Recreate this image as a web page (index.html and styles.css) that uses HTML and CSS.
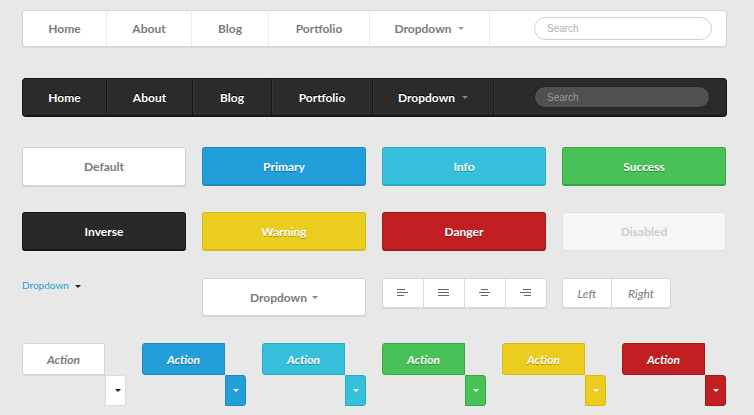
FILE: index.html
```html
<!DOCTYPE html>
<html>
<head>
<meta charset="utf-8">
<link rel="stylesheet" href="styles.css">
</head>
<body>
<div class="page">
  <div class="navbar navbar-light">
    <div class="nav-item nav-home">Home</div>
    <div class="nav-item nav-about">About</div>
    <div class="nav-item nav-blog">Blog</div>
    <div class="nav-item nav-portfolio">Portfolio</div>
    <div class="nav-item nav-dropdown">Dropdown <span class="caret caret-nav"></span></div>
    <div class="search">Search</div>
  </div>

  <div class="navbar navbar-dark">
    <div class="nav-item nav-home">Home</div>
    <div class="nav-item nav-about">About</div>
    <div class="nav-item nav-blog">Blog</div>
    <div class="nav-item nav-portfolio">Portfolio</div>
    <div class="nav-item nav-dropdown">Dropdown <span class="caret caret-nav"></span></div>
    <div class="search">Search</div>
  </div>

  <div class="btn-grid">
    <div class="btn btn-default">Default</div>
    <div class="btn btn-primary">Primary</div>
    <div class="btn btn-info">Info</div>
    <div class="btn btn-success">Success</div>
    <div class="btn btn-inverse">Inverse</div>
    <div class="btn btn-warning">Warning</div>
    <div class="btn btn-danger">Danger</div>
    <div class="btn btn-disabled">Disabled</div>
  </div>

  <div class="misc-row">
    <div class="dd-link">Dropdown <span class="caret caret-dark"></span></div>
    <div class="btn btn-default btn-dd">Dropdown <span class="caret caret-gray"></span></div>
    <div class="btn-group">
      <div class="gbtn gbtn-icon">
        <svg width="12" height="8" viewBox="0 0 12 8"><path d="M0 0.5H8M0 3.5H11M0 6.5H7" stroke="#666" stroke-width="1.2"/></svg>
      </div>
      <div class="gbtn gbtn-icon">
        <svg width="12" height="8" viewBox="0 0 12 8"><path d="M0 0.5H11M0 3.5H11M0 6.5H11" stroke="#666" stroke-width="1.2"/></svg>
      </div>
      <div class="gbtn gbtn-icon">
        <svg width="12" height="8" viewBox="0 0 12 8"><path d="M2 0.5H9M0 3.5H11M2 6.5H9" stroke="#666" stroke-width="1.2"/></svg>
      </div>
      <div class="gbtn gbtn-icon">
        <svg width="12" height="8" viewBox="0 0 12 8"><path d="M3 0.5H11M0 3.5H11M4 6.5H11" stroke="#666" stroke-width="1.2"/></svg>
      </div>
    </div>
    <div class="btn-group btn-group-lr">
      <div class="gbtn gbtn-left">Left</div>
      <div class="gbtn gbtn-right">Right</div>
    </div>
  </div>

  <div class="split-row">
    <div class="split split-default">
      <div class="split-main">Action</div>
      <div class="split-caret"><span class="caret caret-dark"></span></div>
    </div>
    <div class="split split-primary">
      <div class="split-main">Action</div>
      <div class="split-caret"><span class="caret caret-white"></span></div>
    </div>
    <div class="split split-info">
      <div class="split-main">Action</div>
      <div class="split-caret"><span class="caret caret-white"></span></div>
    </div>
    <div class="split split-success">
      <div class="split-main">Action</div>
      <div class="split-caret"><span class="caret caret-white"></span></div>
    </div>
    <div class="split split-warning">
      <div class="split-main">Action</div>
      <div class="split-caret"><span class="caret caret-white"></span></div>
    </div>
    <div class="split split-danger">
      <div class="split-main">Action</div>
      <div class="split-caret"><span class="caret caret-white"></span></div>
    </div>
  </div>
</div>
</body>
</html>
```

FILE: styles.css
```css
* { box-sizing: border-box; }
body {
  margin: 0;
  background: #e8e8e8;
  font-family: Lato, "Open Sans", sans-serif;
}
.page {
  width: 727px;
  padding: 10px 0 0 22px;
}

/* navbars */
.navbar {
  display: flex;
  align-items: stretch;
  width: 705px;
  border-radius: 4px;
}
.navbar-light {
  height: 37px;
  background: #fff;
  border: 1px solid #d4d4d4;
  box-shadow: 0 1px 1px rgba(0,0,0,0.07);
}
.navbar-dark {
  height: 39px;
  margin-top: 31px;
  background: #2b2b2b;
  border: 1px solid #171717;
  border-bottom-width: 2px;
}
.nav-item {
  display: flex;
  align-items: center;
  justify-content: center;
  flex: none;
  font-size: 12px;
  font-weight: 700;
  white-space: pre;
}
.navbar-light .nav-home { width: 84px; }
.navbar-light .nav-about { width: 85px; }
.navbar-light .nav-blog { width: 77px; }
.navbar-light .nav-portfolio { width: 101px; }
.navbar-light .nav-dropdown { width: 120px; }
.navbar-dark .nav-home { width: 84px; }
.navbar-dark .nav-about { width: 86px; }
.navbar-dark .nav-blog { width: 79px; }
.navbar-dark .nav-portfolio { width: 101px; }
.navbar-dark .nav-dropdown { width: 121px; }
.navbar-light .nav-item {
  color: #7a7a7a;
  border-right: 1px solid #ececec;
}
.navbar-dark .nav-item {
  color: #fff;
  border-right: 1px solid #151515;
  box-shadow: 1px 0 0 #363636;
  text-shadow: 0 -1px 0 #000;
}
.search {
  align-self: center;
  margin-left: auto;
  display: flex;
  align-items: center;
  font-family: "Liberation Sans", Arial, sans-serif;
  font-size: 10px;
  padding-left: 12px;
}
.navbar-light .search {
  width: 178px;
  height: 23px;
  margin-right: 14px;
  border: 1px solid #cfcfcf;
  border-radius: 12px;
  color: #b0b0b0;
}
.navbar-dark .search {
  width: 176px;
  height: 22px;
  margin-right: 16px;
  background: #505050;
  border: 1px solid #242424;
  border-radius: 11px;
  color: #9a9a9a;
}

/* carets */
.caret {
  display: inline-block;
  width: 0;
  height: 0;
  border-left: 3px solid transparent;
  border-right: 3px solid transparent;
  border-top: 3px solid #999;
  vertical-align: middle;
  margin-left: 4px;
}
.navbar-dark .caret-nav { border-top-color: #888; }
.caret-dark { border-top-color: #222; }
.caret-gray { border-top-color: #888; }
.caret-white { border-top-color: #fff; margin-left: 0; }

/* buttons */
.btn-grid {
  display: grid;
  grid-template-columns: repeat(4, 164px);
  column-gap: 16px;
  row-gap: 26px;
  margin-top: 30px;
}
.btn {
  height: 39px;
  display: flex;
  align-items: center;
  justify-content: center;
  border-radius: 3px;
  font-size: 12px;
  font-weight: 700;
  color: #fff;
  border: 1px solid transparent;
  border-bottom-width: 2px;
  text-shadow: 0 1px 0 rgba(0,0,0,0.35);
}
.btn-default {
  background: #fff;
  color: #7a7a7a;
  border: 1px solid #d3d3d3;
  box-shadow: 0 1px 1px rgba(0,0,0,0.08);
  text-shadow: none;
}
.btn-primary { background: #229eda; border-color: #1e8ac0; }
.btn-info { background: #36c0db; border-color: #2aa9c2; }
.btn-success { background: #48c256; border-color: #3aa548; }
.btn-inverse { background: #292929; border-color: #151515; }
.btn-warning { background: #ebcd1f; border-color: #d8ba16; }
.btn-danger { background: #c11f21; border-color: #a6171a; }
.btn-disabled {
  background: #f6f6f6;
  color: #cdcdcd;
  border: 1px solid #e0e0e0;
  text-shadow: none;
}

/* misc row */
.misc-row {
  display: grid;
  grid-template-columns: repeat(3, 164px) auto;
  column-gap: 16px;
  align-items: start;
  margin-top: 27px;
}
.dd-link {
  margin-top: 1px;
  font-size: 10px;
  color: #2a9fd6;
}
.btn-dd { height: 38px; }
.btn-dd .caret { margin-left: 5px; }
.btn-group {
  display: flex;
  height: 30px;
  width: 165px;
  background: #fff;
  border: 1px solid #d6d6d6;
  border-radius: 3px;
  box-shadow: 0 1px 1px rgba(0,0,0,0.08);
}
.btn-group-lr { width: 109px; }
.gbtn {
  display: flex;
  align-items: center;
  justify-content: center;
  border-right: 1px solid #dadada;
  font-size: 12px;
  font-style: italic;
  color: #7a7a7a;
}
.gbtn:last-child { border-right: none; }
.gbtn-icon { flex: 1; }
.gbtn-left { width: 49px; }
.gbtn-right { flex: 1; }

/* split buttons */
.split-row {
  display: flex;
  gap: 16px;
  margin-top: 27px;
}
.split {
  display: flex;
  width: 104px;
}
.split-main {
  width: 83px;
  height: 32px;
  display: flex;
  align-items: center;
  justify-content: center;
  font-size: 12px;
  font-style: italic;
  font-weight: 700;
  color: #fff;
  border-radius: 3px 0 0 3px;
  border: 1px solid transparent;
  text-shadow: 0 1px 0 rgba(0,0,0,0.35);
}
.split-caret {
  width: 21px;
  height: 31px;
  margin-top: 32px;
  display: flex;
  align-items: center;
  justify-content: center;
  border-radius: 0 3px 3px 0;
  border: 1px solid transparent;
}
.split-default .split-main {
  background: #fff;
  color: #7a7a7a;
  border-color: #d6d6d6;
  text-shadow: none;
  box-shadow: 0 1px 1px rgba(0,0,0,0.08);
}
.split-default .split-caret {
  background: #fff;
  border-color: #dcdcdc;
  box-shadow: 0 1px 1px rgba(0,0,0,0.08);
}
.split-primary .split-main, .split-primary .split-caret { background: #229eda; border-color: #1e8ac0; }
.split-info .split-main, .split-info .split-caret { background: #36c0db; border-color: #2aa9c2; }
.split-success .split-main, .split-success .split-caret { background: #48c256; border-color: #3aa548; }
.split-warning .split-main, .split-warning .split-caret { background: #ebcd1f; border-color: #d8ba16; }
.split-danger .split-main, .split-danger .split-caret { background: #c11f21; border-color: #a6171a; }
```
